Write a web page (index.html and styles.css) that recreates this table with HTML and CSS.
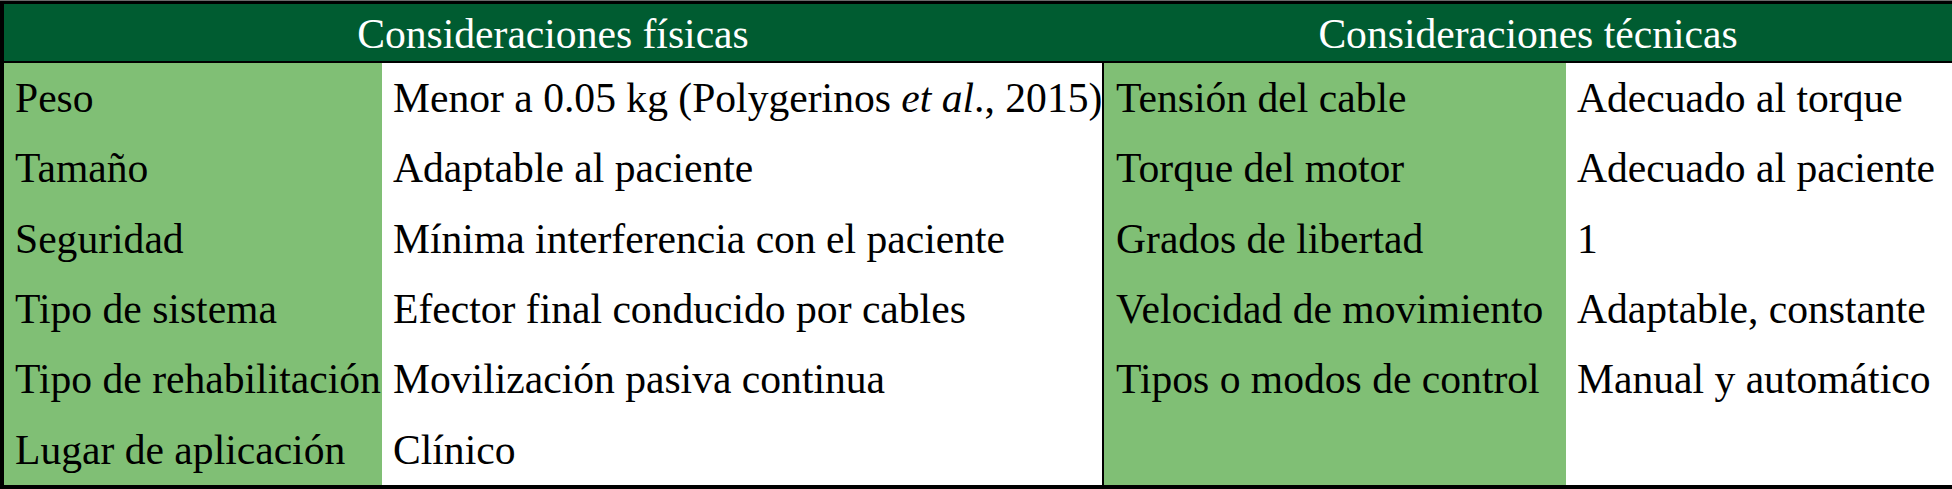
FILE: index.html
```html
<!DOCTYPE html>
<html lang="es">
<head>
<meta charset="utf-8">
<title>Consideraciones</title>
<link rel="stylesheet" href="styles.css">
</head>
<body>
<div class="sheet">
  <div class="head">
    <div class="head-cell"><span>Consideraciones físicas</span></div>
    <div class="head-cell head-right"><span>Consideraciones técnicas</span></div>
  </div>
  <div class="body">
    <div class="cell label"><span>Peso</span></div>
    <div class="cell value"><span>Menor a 0.05 kg (Polygerinos <em>et al</em>., 2015)</span></div>
    <div class="cell label divide"><span>Tensión del cable</span></div>
    <div class="cell value"><span>Adecuado al torque</span></div>

    <div class="cell label"><span>Tamaño</span></div>
    <div class="cell value"><span>Adaptable al paciente</span></div>
    <div class="cell label divide"><span>Torque del motor</span></div>
    <div class="cell value"><span>Adecuado al paciente</span></div>

    <div class="cell label"><span>Seguridad</span></div>
    <div class="cell value"><span>Mínima interferencia con el paciente</span></div>
    <div class="cell label divide"><span>Grados de libertad</span></div>
    <div class="cell value"><span>1</span></div>

    <div class="cell label"><span>Tipo de sistema</span></div>
    <div class="cell value"><span>Efector final conducido por cables</span></div>
    <div class="cell label divide"><span>Velocidad de movimiento</span></div>
    <div class="cell value"><span>Adaptable, constante</span></div>

    <div class="cell label"><span>Tipo de rehabilitación</span></div>
    <div class="cell value"><span>Movilización pasiva continua</span></div>
    <div class="cell label divide"><span>Tipos o modos de control</span></div>
    <div class="cell value"><span>Manual y automático</span></div>

    <div class="cell label"><span>Lugar de aplicación</span></div>
    <div class="cell value"><span>Clínico</span></div>
    <div class="cell label divide"></div>
    <div class="cell value"></div>
  </div>
</div>
</body>
</html>
```

FILE: styles.css
```css
html, body {
  margin: 0;
  padding: 0;
  background: #ffffff;
}

body {
  font-family: "Liberation Serif", Tinos, "Times New Roman", Times, "Nimbus Roman", "DejaVu Serif", serif;
  font-size: 41.6px;
  color: #000000;
  width: 1952px;
  height: 489px;
  overflow: hidden;
}

.sheet {
  border-top: 1px solid #6b6b6b;
  height: 488px;
  box-sizing: border-box;
}

.head {
  display: grid;
  grid-template-columns: 1098px 1fr;
  border-top: 3px solid #000000;
  border-left: 4px solid #000000;
  border-bottom: 2px solid #000000;
  background: #005c31;
  box-sizing: border-box;
  height: 62px;
}

.head-cell {
  color: #ffffff;
  text-align: center;
  white-space: nowrap;
  display: flex;
  align-items: center;
  justify-content: center;
  padding-top: 2px;
}

.head-right {
  margin-left: 2px;
}

.body {
  display: grid;
  grid-template-columns: 378px 720px 464px 1fr;
  grid-template-rows: repeat(6, 1fr);
  height: 426px;
  border-left: 4px solid #000000;
  border-bottom: 4px solid #000000;
  box-sizing: border-box;
}

.cell {
  display: flex;
  align-items: center;
  padding-left: 11px;
  white-space: nowrap;
}

.label {
  background: #80bf75;
}

.value {
  background: #ffffff;
}

.divide {
  border-left: 2px solid #000000;
  padding-left: 12px;
}

em {
  font-style: italic;
}
```
